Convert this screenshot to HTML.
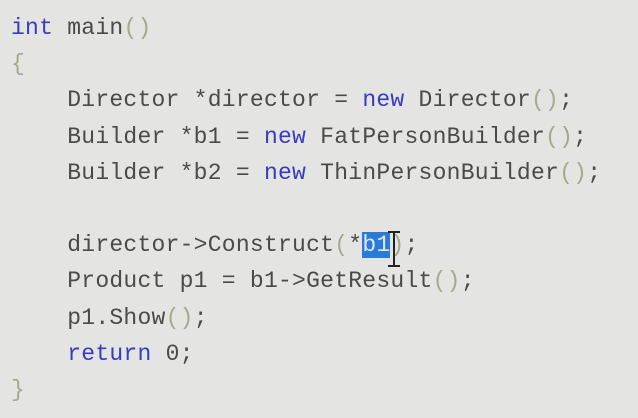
<html><head><style>
body{margin:0;width:638px;height:418px;background:#e4e4e2;overflow:hidden;position:relative}
pre{margin:0;position:absolute;left:11px;top:10px;font-family:"Liberation Mono",monospace;font-size:23px;line-height:36.2px;color:#4a4a4a;letter-spacing:0.25px}
.k{color:#3a3ac0}.p{color:#a8a890}
.h{background:#2a7ad8;color:#dfe8f5}
</style></head><body>
<pre><span class="k">int</span> main<span class="p">()</span>
<span class="p">{</span>
    Director *director = <span class="k">new</span> Director<span class="p">()</span>;
    Builder *b1 = <span class="k">new</span> FatPersonBuilder<span class="p">()</span>;
    Builder *b2 = <span class="k">new</span> ThinPersonBuilder<span class="p">()</span>;

    director-&gt;Construct<span class="p">(</span>*<span class="h">b1</span><span class="p">)</span>;
    Product p1 = b1-&gt;GetResult<span class="p">()</span>;
    p1.Show<span class="p">()</span>;
    <span class="k">return</span> 0;
<span class="p">}</span></pre>
<div style="position:absolute;left:393px;top:232px;width:2px;height:34px;background:#222"></div>
<div style="position:absolute;left:388px;top:231px;width:12px;height:2px;background:#222"></div>
<div style="position:absolute;left:388px;top:265px;width:12px;height:2px;background:#222"></div>
</body></html>
